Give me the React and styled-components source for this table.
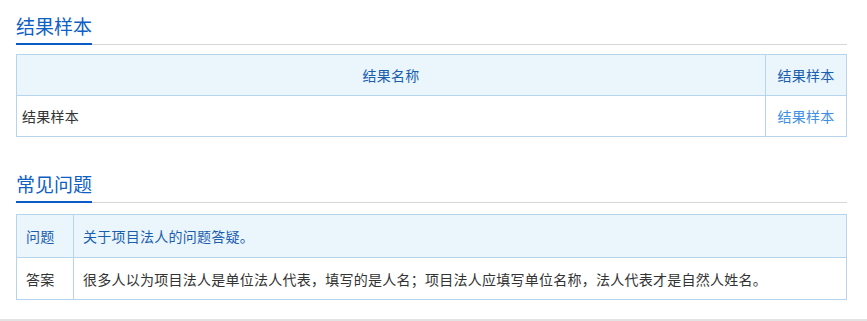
import React from "react";
import styled, { createGlobalStyle } from "styled-components";

const GlobalStyle = createGlobalStyle`
  html, body {
    margin: 0;
    padding: 0;
    background: #ffffff;
  }
  body {
    font-family: "Noto Sans CJK SC", "Noto Sans", sans-serif;
    color: #333333;
  }
`;

const Page = styled.div`
  height: 321px;
  box-sizing: border-box;
  padding: 0 20px 0 16px;
  border-bottom: 2px solid #e3e3e3;
`;

const Section = styled.section`
  padding-top: ${(p) => p.$top}px;
`;

const SectionHead = styled.div`
  display: flex;
  border-bottom: 1px solid #d6d6d6;
`;

const HeadTitle = styled.h2`
  margin: 0 0 -1px;
  padding: 0 0 4px;
  font-size: 19px;
  line-height: 26px;
  font-weight: 400;
  color: #0f5fc4;
  border-bottom: 2px solid #0a5bc6;
`;

const Table = styled.table`
  width: 100%;
  margin-top: ${(p) => p.$gap}px;
  border-collapse: collapse;
  table-layout: fixed;
  font-size: 14px;
  letter-spacing: 0.25px;
`;

const HeadRow = styled.tr`
  background: #eaf5fc;
  height: ${(p) => p.$h}px;
`;

const BodyRow = styled.tr`
  background: #ffffff;
  height: ${(p) => p.$h}px;
`;

const Cell = styled.td`
  border: 1px solid #b7d4ed;
  padding: 0 ${(p) => p.$pad}px;
  text-align: ${(p) => (p.$center ? "center" : "left")};
  color: ${(p) =>
    p.$tone === "head" ? "#1a5eae" : p.$tone === "link" ? "#3f8fe2" : "#333333"};
  white-space: nowrap;
  vertical-align: middle;
`;

const LinkText = styled.a`
  color: inherit;
  text-decoration: none;
  cursor: pointer;
`;

export default function App() {
  return (
    <>
      <GlobalStyle />
      <Page>
        <Section $top={13}>
          <SectionHead>
            <HeadTitle>结果样本</HeadTitle>
          </SectionHead>
          <Table $gap={9}>
            <colgroup>
              <col />
              <col style={{ width: 81 }} />
            </colgroup>
            <tbody>
              <HeadRow $h={41}>
                <Cell $center $tone="head" $pad={5}>结果名称</Cell>
                <Cell $center $tone="head" $pad={0}>结果样本</Cell>
              </HeadRow>
              <BodyRow $h={41}>
                <Cell $pad={5}>结果样本</Cell>
                <Cell $center $tone="link" $pad={0}>
                  <LinkText>结果样本</LinkText>
                </Cell>
              </BodyRow>
            </tbody>
          </Table>
        </Section>

        <Section $top={34}>
          <SectionHead>
            <HeadTitle>常见问题</HeadTitle>
          </SectionHead>
          <Table $gap={11}>
            <colgroup>
              <col style={{ width: 57 }} />
              <col />
            </colgroup>
            <tbody>
              <HeadRow $h={43}>
                <Cell $tone="head" $pad={9}>问题</Cell>
                <Cell $tone="head" $pad={9}>关于项目法人的问题答疑。</Cell>
              </HeadRow>
              <BodyRow $h={42}>
                <Cell $pad={9}>答案</Cell>
                <Cell $pad={9}>
                  很多人以为项目法人是单位法人代表，填写的是人名；项目法人应填写单位名称，法人代表才是自然人姓名。
                </Cell>
              </BodyRow>
            </tbody>
          </Table>
        </Section>
      </Page>
    </>
  );
}
